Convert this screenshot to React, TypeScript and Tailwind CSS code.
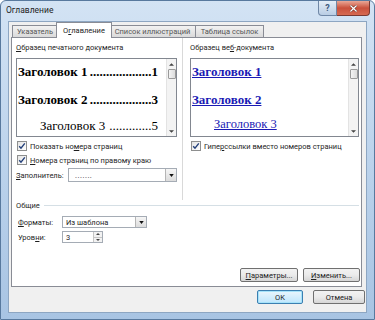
import React from 'react';

const CheckBox: React.FC = () => (
  <span className="flex h-[10px] w-[10px] flex-shrink-0 items-center justify-center border border-[#8e8f8f] bg-gradient-to-br from-[#e4e4e4] to-white">
    <svg viewBox="0 0 8 8" className="h-[8px] w-[8px]">
      <path d="M1.2 4.2 L3 6.2 L6.8 1.4" fill="none" stroke="#24407a" strokeWidth="1.4" />
    </svg>
  </span>
);

const DropArrow: React.FC = () => (
  <span className="flex h-full w-[11px] flex-shrink-0 items-center justify-center border-l border-[#b5b5b5] bg-gradient-to-b from-[#f6f6f6] to-[#dcdcdc]">
    <svg viewBox="0 0 6 4" className="h-[3px] w-[5px]">
      <path d="M0 0 H6 L3 4 Z" fill="#111" />
    </svg>
  </span>
);

const ScrollBar: React.FC = () => (
  <div className="flex w-[10px] flex-col border-l border-[#e3e3e3] bg-[#f3f3f3]">
    <div className="flex h-[10px] items-center justify-center">
      <svg viewBox="0 0 6 3" className="h-[3px] w-[5px]">
        <path d="M0 3 H6 L3 0 Z" fill="#444" />
      </svg>
    </div>
    <div className="mx-auto h-[10px] w-[8px] rounded-[1px] border border-[#9a9a9a] bg-gradient-to-r from-[#f4f4f4] to-[#dcdcdc]" />
    <div className="flex-1" />
    <div className="flex h-[10px] items-center justify-center">
      <svg viewBox="0 0 6 3" className="h-[3px] w-[5px]">
        <path d="M0 0 H6 L3 3 Z" fill="#444" />
      </svg>
    </div>
  </div>
);

const Btn: React.FC<{ w: string; children: React.ReactNode; primary?: boolean }> = ({ w, children, primary }) => (
  <div
    className={`flex h-[14px] items-center justify-center rounded-[2px] border text-[7.5px] text-[#222] ${w} ${
      primary
        ? 'border-[#3c7fb1] bg-gradient-to-b from-[#eaf6fd] to-[#bee6fd] shadow-[inset_0_0_0_1px_#a6e3fa]'
        : 'border-[#707070] bg-gradient-to-b from-[#f2f2f2] via-[#ebebeb] to-[#d6d6d6]'
    }`}
  >
    {children}
  </div>
);

export default function App() {
  return (
    <div
      className="flex h-[320px] w-[375px] flex-col overflow-hidden rounded-t-[6px] border border-[#58799e] bg-gradient-to-b from-[#d3e3f4] via-[#bcd3ec] to-[#a8c4e3]"
      style={{ fontFamily: 'Roboto, "Open Sans", sans-serif' }}
    >
      {/* title bar */}
      <div className="flex h-[20px] flex-shrink-0 items-start justify-between">
        <div className="pl-[5px] pt-[4px] text-[8.5px] leading-[11px] text-[#1e1e1e]">Оглавление</div>
        <div className="mr-[4px] flex">
          <div className="flex h-[15px] w-[19px] items-center justify-center rounded-bl-[4px] border border-t-0 border-[#6f87a6] bg-gradient-to-b from-[#e4edf7] to-[#b9cde4] text-[9px] font-bold leading-none text-[#3d5a80]">
            ?
          </div>
          <div className="flex h-[15px] w-[33px] items-center justify-center rounded-br-[4px] border border-l-0 border-t-0 border-[#7a3a33] bg-gradient-to-b from-[#e9a797] via-[#c9503c] to-[#d66a52]">
            <svg viewBox="0 0 10 8" className="h-[7px] w-[9px]">
              <path d="M1.5 0.5 L8.5 7.5 M8.5 0.5 L1.5 7.5" stroke="#5a1a12" strokeWidth="2.6" />
              <path d="M1.5 0.5 L8.5 7.5 M8.5 0.5 L1.5 7.5" stroke="#fff" strokeWidth="1.5" />
            </svg>
          </div>
        </div>
      </div>

      {/* client area */}
      <div className="mx-[7px] mb-[6px] flex flex-1 flex-col border border-[#8da6c2] bg-[#f0f0f0] text-[7.5px] leading-[11px] text-[#1e1e1e]">
        {/* tabs */}
        <div className="ml-[3px] flex h-[15px] flex-shrink-0 items-end">
          <div className="flex h-[12px] w-[46px] items-center justify-center border border-b-0 border-[#898c95] bg-gradient-to-b from-[#f2f2f2] to-[#dadada] text-[#555]">
            Указатель
          </div>
          <div className="relative z-10 -mx-[2px] -mb-px flex h-[16px] w-[56px] items-center justify-center border border-b-0 border-[#898c95] bg-white">
            <span>
              О<span className="underline">г</span>лавление
            </span>
          </div>
          <div className="flex h-[12px] w-[86px] items-center justify-center border border-b-0 border-l-0 border-[#898c95] bg-gradient-to-b from-[#f2f2f2] to-[#dadada] text-[#555]">
            Список иллюстраций
          </div>
          <div className="flex h-[12px] w-[68px] items-center justify-center border border-b-0 border-l-0 border-[#898c95] bg-gradient-to-b from-[#f2f2f2] to-[#dadada] text-[#555]">
            Таблица ссылок
          </div>
        </div>

        {/* tab panel */}
        <div className="ml-[2px] mr-[4px] flex h-[250px] flex-shrink-0 flex-col border border-[#898c95] bg-white">
          <div className="flex h-[162px] pl-[4px]">
            {/* print preview */}
            <div className="flex w-[161px] flex-col pt-[4px]">
              <div className="h-[11px]">
                <span className="underline">О</span>бразец печатного документа
              </div>
              <div className="mt-[5px] flex h-[79px] border border-[#828790]">
                <div className="flex min-w-0 flex-1 flex-col whitespace-nowrap pl-[1px] pr-[8px] pt-[4px] font-['Liberation_Serif',serif] text-black">
                  <div className="flex h-[18px] items-center justify-between text-[13px] font-bold leading-[18px]">
                    <span>Заголовок 1</span>
                    <span>...................1</span>
                  </div>
                  <div className="h-[10px]" />
                  <div className="flex h-[18px] items-center justify-between text-[13px] font-bold leading-[18px]">
                    <span>Заголовок 2</span>
                    <span>...................3</span>
                  </div>
                  <div className="h-[8px]" />
                  <div className="flex h-[18px] items-center justify-between pl-[22px] text-[13px] leading-[18px]">
                    <span>Заголовок 3</span>
                    <span>.............5</span>
                  </div>
                </div>
                <ScrollBar />
              </div>
              <div className="mt-[3px] flex h-[12px] items-center gap-[3px] pl-[1px]">
                <CheckBox />
                <span>
                  Показать но<span className="underline">м</span>ера страниц
                </span>
              </div>
              <div className="mt-[2px] flex h-[12px] items-center gap-[3px] pl-[1px]">
                <CheckBox />
                <span>
                  <span className="underline">Н</span>омера страниц по правому краю
                </span>
              </div>
              <div className="mt-[2px] flex h-[14px] items-center">
                <span className="w-[52px]">
                  <span className="underline">З</span>аполнитель:
                </span>
                <div className="flex h-[14px] flex-1 items-center border border-[#a5acb5] bg-white">
                  <span className="flex-1 pl-[6px] tracking-[0.5px]">.......</span>
                  <DropArrow />
                </div>
              </div>
            </div>

            <div className="ml-[5px] w-px bg-[#d9d9d9]" />

            {/* web preview */}
            <div className="ml-[7px] flex w-[169px] flex-col pt-[4px]">
              <div className="h-[11px]">
                Образец ве<span className="underline">б</span>-документа
              </div>
              <div className="mt-[5px] flex h-[79px] border border-[#828790]">
                <div className="flex min-w-0 flex-1 flex-col whitespace-nowrap pl-[1px] pt-[5px] font-['Liberation_Serif',serif] text-[#1a1ab4]">
                  <div className="h-[16px] text-[13px] font-bold leading-[16px] underline">Заголовок 1</div>
                  <div className="h-[12px]" />
                  <div className="h-[16px] text-[13px] font-bold leading-[16px] underline">Заголовок 2</div>
                  <div className="h-[8px]" />
                  <div className="h-[16px] pl-[22px] text-[12.5px] leading-[16px] underline">Заголовок 3</div>
                </div>
                <ScrollBar />
              </div>
              <div className="mt-[3px] flex h-[12px] items-center gap-[3px] pl-[1px]">
                <CheckBox />
                <span>
                  Гипе<span className="underline">р</span>ссылки вместо номеров страниц
                </span>
              </div>
            </div>
          </div>

          {/* general group */}
          <div className="flex h-[11px] items-center gap-[4px] pl-[4px] pr-[2px]">
            <span>Общие</span>
            <div className="h-px flex-1 bg-[#d5dfe5]" />
          </div>
          <div className="mt-[5px] flex h-[12px] items-center pl-[6px]">
            <span className="w-[44px]">
              <span className="underline">Ф</span>орматы:
            </span>
            <div className="flex h-[12px] w-[85px] items-center border border-[#a5acb5] bg-white">
              <span className="flex-1 pl-[3px]">Из шаблона</span>
              <DropArrow />
            </div>
          </div>
          <div className="mt-[3px] flex h-[12px] items-center pl-[6px]">
            <span className="w-[44px]">
              Уров<span className="underline">н</span>и:
            </span>
            <div className="flex h-[12px] w-[41px] items-center border border-[#a5acb5] bg-white">
              <span className="flex-1 pl-[3px]">3</span>
              <div className="flex h-full w-[9px] flex-col border-l border-[#c5c5c5] bg-[#f2f2f2]">
                <div className="flex flex-1 items-center justify-center border-b border-[#c5c5c5]">
                  <svg viewBox="0 0 6 3" className="h-[2px] w-[4px]">
                    <path d="M0 3 H6 L3 0 Z" fill="#444" />
                  </svg>
                </div>
                <div className="flex flex-1 items-center justify-center">
                  <svg viewBox="0 0 6 3" className="h-[2px] w-[4px]">
                    <path d="M0 0 H6 L3 3 Z" fill="#444" />
                  </svg>
                </div>
              </div>
            </div>
          </div>

          <div className="mb-[4px] mr-[1px] mt-auto flex justify-end gap-[5px]">
            <Btn w="w-[58px]">
              <span>
                <span className="underline">П</span>араметры...
              </span>
            </Btn>
            <Btn w="w-[57px]">
              <span>
                <span className="underline">И</span>зменить...
              </span>
            </Btn>
          </div>
        </div>

        {/* dialog buttons */}
        <div className="mr-[1px] mt-[3px] flex justify-end gap-[10px]">
          <Btn w="w-[46px]" primary>
            OK
          </Btn>
          <Btn w="w-[52px]">Отмена</Btn>
        </div>
      </div>
    </div>
  );
}
